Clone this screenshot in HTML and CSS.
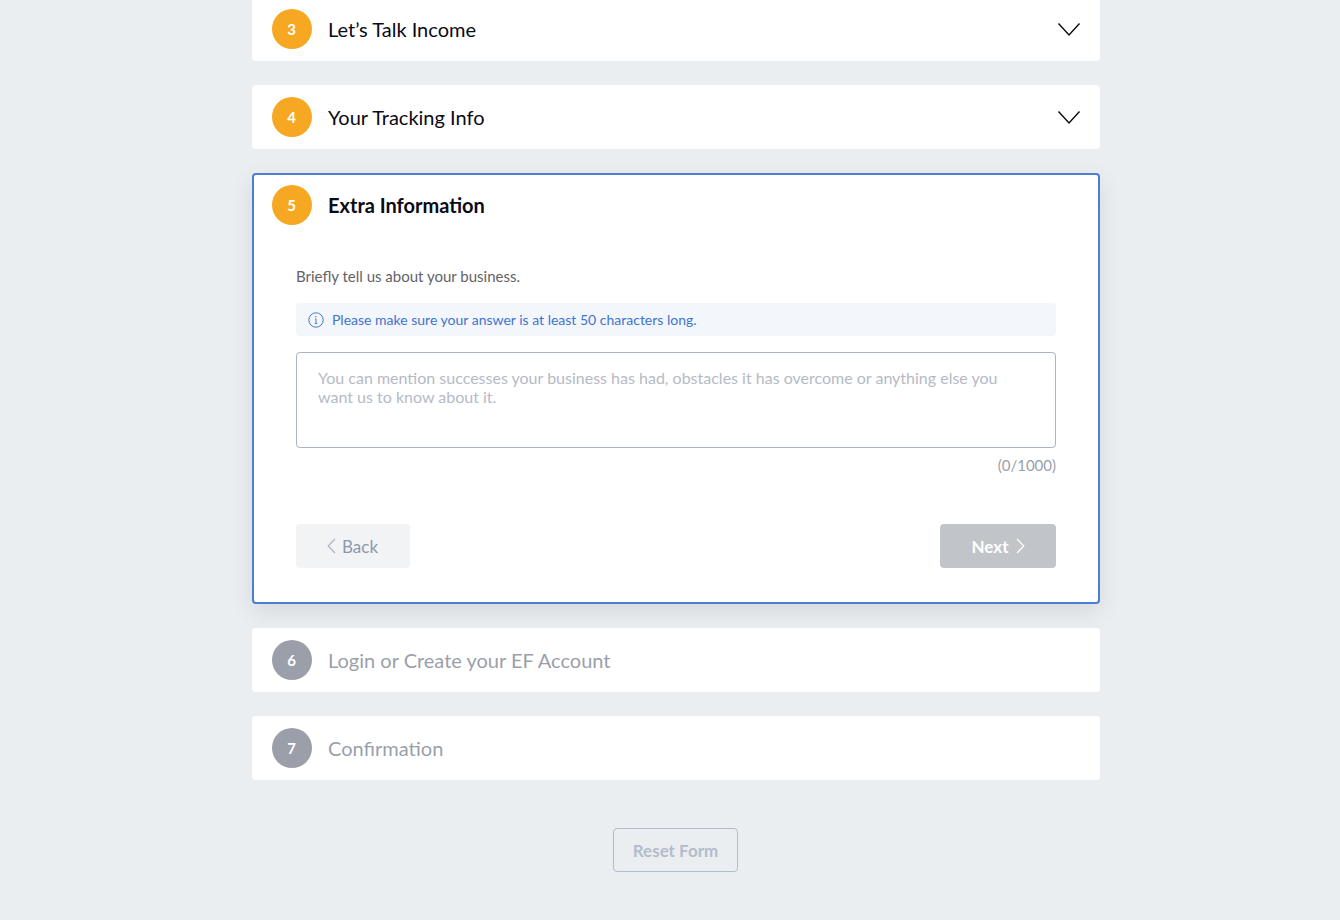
FILE: index.html
```html
<!DOCTYPE html>
<html lang="en">
<head>
<meta charset="utf-8">
<title>Application form</title>
<link rel="stylesheet" href="styles.css">
</head>
<body>
<main class="steps">
  <section class="card">
    <header class="head"><span class="num">3</span><h2 class="title">Let’s Talk Income</h2>
      <svg class="chev" width="24" height="16" viewBox="0 0 24 16"><path d="M1.5 1.5 12 13 22.500 1.500" fill="none" stroke="#0a0a14" stroke-width="1.400"/></svg></header>
  </section>
  <section class="card">
    <header class="head"><span class="num">4</span><h2 class="title">Your Tracking Info</h2>
      <svg class="chev" width="24" height="16" viewBox="0 0 24 16"><path d="M1.5 1.5 12 13 22.500 1.500" fill="none" stroke="#0a0a14" stroke-width="1.400"/></svg></header>
  </section>
  <section class="card active">
    <header class="head"><span class="num">5</span><h2 class="title strong">Extra Information</h2></header>
    <div class="body">
      <p class="question">Briefly tell us about your business.</p>
      <div class="note">
        <svg width="16" height="16" viewBox="0 0 16 16"><circle cx="8" cy="8" r="7.200" fill="none" stroke="#4a7bd0" stroke-width="1"/><path d="M8 7v4.500M6.800 11.500h2.400M7 7h1" fill="none" stroke="#4a7bd0" stroke-width="1"/><circle cx="7.900" cy="4.800" r=".7" fill="#4a7bd0"/></svg>
        <span>Please make sure your answer is at least 50 characters long.</span>
      </div>
      <div class="area">You can mention successes your business has had, obstacles it has overcome or anything else you want us to know about it.</div>
      <div class="count">(0/1000)</div>
      <div class="actions">
        <button class="btn back"><svg width="9" height="16" viewBox="0 0 9 16"><path d="M8 1 1.200 8 8 15" fill="none" stroke="#aab4c2" stroke-width="1.200"/></svg>Back</button>
        <button class="btn next">Next<svg width="9" height="16" viewBox="0 0 9 16"><path d="M1 1 7.800 8 1 15" fill="none" stroke="#fff" stroke-width="1.200"/></svg></button>
      </div>
    </div>
  </section>
  <section class="card off">
    <header class="head"><span class="num">6</span><h2 class="title">Login or Create your EF Account</h2></header>
  </section>
  <section class="card off">
    <header class="head"><span class="num">7</span><h2 class="title">Confirmation</h2></header>
  </section>
  <div class="reset-row"><button class="reset">Reset Form</button></div>
</main>
</body>
</html>
```

FILE: styles.css
```css
* { box-sizing: border-box; }
html, body { height: 920px; overflow: hidden; }
body {
  margin: 0;
  background: #ebeef1;
  font-family: Lato, "Liberation Sans", sans-serif;
}
.steps {
  width: 848px;
  margin: -3px 0 0 252px;
  display: flex;
  flex-direction: column;
  gap: 24px;
}
.card {
  background: #fff;
  border-radius: 4px;
}
.head {
  height: 64px;
  padding: 0 19px 0 20px;
  display: flex;
  align-items: center;
  gap: 16px;
}
.num {
  width: 40px;
  height: 40px;
  padding-right: 1px;
  border-radius: 50%;
  background: #f7a823;
  color: #fff;
  font-size: 15px;
  font-weight: 700;
  display: flex;
  align-items: center;
  justify-content: center;
  flex: none;
}
.title {
  margin: 0;
  font-size: 20px;
  font-weight: 400;
  color: #0a0a14;
  flex: 1;
}
.title.strong { font-weight: 700; }
.chev { flex: none; margin: 2px 0 0; }
.off .num { background: #9a9fa9; }
.off .title { color: #9a9fa9; }
.active {
  border: 2px solid #4a7fd4;
  box-shadow: 0 8px 24px rgba(0, 0, 0, .09);
}
.active .head { height: 60px; padding: 0 18px; }
.body { padding: 0 42px 34px; }
.question {
  margin: 32px 0 0;
  font-size: 15px;
  line-height: 18px;
  color: #5f6368;
}
.note {
  margin-top: 18px;
  height: 33px;
  padding: 0 12px;
  background: #f3f6fb;
  border-radius: 4px;
  display: flex;
  align-items: center;
  gap: 8px;
  font-size: 14px;
  color: #3f74d0;
}
.area {
  margin-top: 16px;
  height: 96px;
  padding: 15px 21px;
  border: 1px solid #a9b4c4;
  border-radius: 4px;
  font-size: 16px;
  line-height: 19px;
  color: #b5bac6;
}
.count {
  margin-top: 8px;
  text-align: right;
  font-size: 15px;
  line-height: 18px;
  color: #9a9fa9;
}
.actions {
  margin-top: 50px;
  display: flex;
  justify-content: space-between;
}
.btn {
  height: 44px;
  border: 0;
  border-radius: 4px;
  font-family: inherit;
  font-size: 17px;
  display: flex;
  align-items: center;
  justify-content: center;
}
.back { width: 114px; gap: 6px; padding: 0 1px 0 0; background: #f2f3f5; color: #8c99ad; }
.next { width: 116px; gap: 8px; padding: 0 0 0 1px; background: #c1c5c9; color: #fff; font-weight: 700; }
.reset-row {
  margin-top: 24px;
  padding-right: 1px;
  display: flex;
  justify-content: center;
}
.reset {
  width: 125px;
  height: 44px;
  border: 1px solid #b3bccb;
  border-radius: 4px;
  background: transparent;
  font-family: inherit;
  font-size: 17px;
  font-weight: 700;
  color: #b3bccb;
}
```
